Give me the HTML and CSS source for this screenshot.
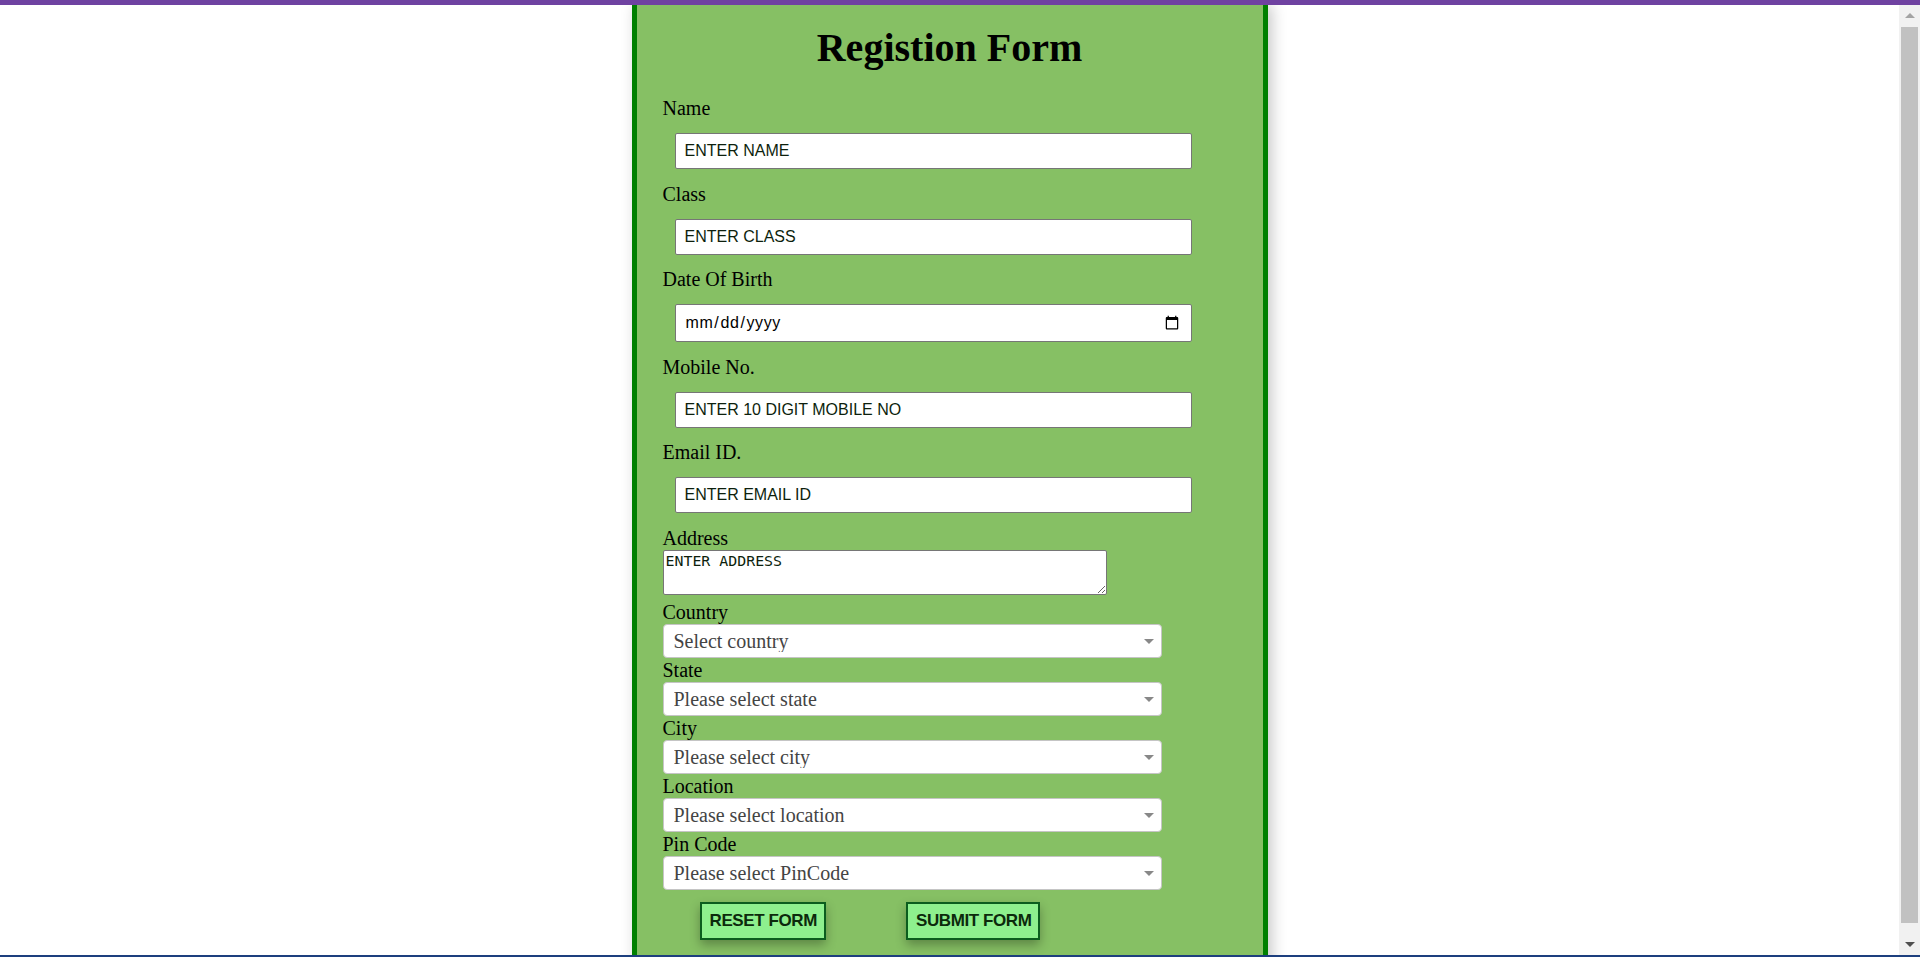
FILE: index.html
```html
<!DOCTYPE html>
<html lang="en">
<head>
<meta charset="utf-8">
<title>Registion Form</title>
<link rel="stylesheet" href="styles.css">
</head>
<body>
<div class="topbar"></div>
<div class="window">
  <div class="page">
    <div class="card">
      <h1 class="title">Registion Form</h1>
      <form class="form">
        <div class="field">
          <label class="label" for="name">Name</label>
          <input class="text-input" id="name" type="text" placeholder="ENTER NAME">
        </div>
        <div class="field">
          <label class="label" for="cls">Class</label>
          <input class="text-input" id="cls" type="text" placeholder="ENTER CLASS">
        </div>
        <div class="field">
          <label class="label" for="dob">Date Of Birth</label>
          <input class="text-input date-input" id="dob" type="date">
        </div>
        <div class="field">
          <label class="label" for="mob">Mobile No.</label>
          <input class="text-input" id="mob" type="text" placeholder="ENTER 10 DIGIT MOBILE NO">
        </div>
        <div class="field">
          <label class="label" for="mail">Email ID.</label>
          <input class="text-input" id="mail" type="text" placeholder="ENTER EMAIL ID">
        </div>
        <div class="field-plain">
          <label class="label" for="addr">Address</label>
          <textarea class="textarea" id="addr" placeholder="ENTER ADDRESS"></textarea>
        </div>
        <div class="field-plain">
          <label class="label" for="country">Country</label>
          <div class="select-wrap"><select class="select" id="country"><option>Select country</option></select></div>
        </div>
        <div class="field-plain">
          <label class="label" for="state">State</label>
          <div class="select-wrap"><select class="select" id="state"><option>Please select state</option></select></div>
        </div>
        <div class="field-plain">
          <label class="label" for="city">City</label>
          <div class="select-wrap"><select class="select" id="city"><option>Please select city</option></select></div>
        </div>
        <div class="field-plain">
          <label class="label" for="loc">Location</label>
          <div class="select-wrap"><select class="select" id="loc"><option>Please select location</option></select></div>
        </div>
        <div class="field-plain">
          <label class="label" for="pin">Pin Code</label>
          <div class="select-wrap"><select class="select" id="pin"><option>Please select PinCode</option></select></div>
        </div>
        <div class="actions">
          <button type="reset" class="btn">RESET FORM</button>
          <button type="submit" class="btn">SUBMIT FORM</button>
        </div>
      </form>
    </div>
  </div>
  <div class="scrollbar" aria-hidden="true">
    <div class="sb-button sb-up"><span class="sb-arrow-up"></span></div>
    <div class="sb-track"><div class="sb-thumb"></div></div>
    <div class="sb-button sb-down"><span class="sb-arrow-down"></span></div>
  </div>
</div>
<div class="bottombar"></div>
</body>
</html>
```

FILE: styles.css
```css
html, body {
  margin: 0;
  padding: 0;
  height: 100%;
  overflow: hidden;
  background: #ffffff;
}

body {
  display: flex;
  flex-direction: column;
  font-family: "Liberation Serif", "Times New Roman", serif;
  color: #000;
}

.topbar {
  flex: none;
  height: 5px;
  background: #6f42a1;
}

.bottombar {
  flex: none;
  height: 2px;
  background: #1d3f7e;
}

.window {
  flex: 1;
  min-height: 0;
  display: flex;
}

.page {
  flex: 1;
  min-width: 0;
  overflow: hidden;
}

/* drawn scrollbar */
.scrollbar {
  flex: none;
  width: 21px;
  display: flex;
  flex-direction: column;
  background: #f1f1f1;
}

.sb-button {
  flex: none;
  height: 21px;
  display: flex;
  align-items: center;
  justify-content: center;
}

.sb-arrow-up {
  width: 0;
  height: 0;
  border-style: solid;
  border-width: 0 5px 5px 5px;
  border-color: transparent transparent #a3a3a3 transparent;
}

.sb-arrow-down {
  width: 0;
  height: 0;
  border-style: solid;
  border-width: 5px 5px 0 5px;
  border-color: #505050 transparent transparent transparent;
}

.sb-track {
  flex: 1;
  padding: 1px 2px 11px;
  display: flex;
}

.sb-thumb {
  flex: 1;
  background: #c1c1c1;
}

.card {
  box-sizing: border-box;
  width: 636px;
  margin: 0 auto;
  padding: 20px 26px 32px;
  background: #86c064;
  border-left: 5px solid #008000;
  border-right: 5px solid #008000;
  box-shadow: 4px 0 14px rgba(0, 0, 0, 0.22);
}

.title {
  margin: 0 0 26px;
  font-size: 40px;
  line-height: 46px;
  font-weight: bold;
  text-align: center;
}

.form {
  display: flex;
  flex-direction: column;
}

.label {
  display: block;
  font-size: 20px;
  line-height: 23px;
}

.text-input {
  display: block;
  box-sizing: border-box;
  width: 517px;
  height: 36px;
  margin: 13px 0 13.7px 12px;
  padding: 0 9px;
  border: 1px solid #767676;
  border-radius: 2px;
  background: #fff;
  font-family: "Liberation Sans", Arial, sans-serif;
  font-size: 16px;
  color: #000;
}

.text-input::placeholder {
  color: #0d1f0d;
  opacity: 1;
}

.date-input {
  height: 37.5px;
  letter-spacing: 0.6px;
}

.textarea {
  display: block;
  box-sizing: border-box;
  width: 444px;
  height: 45px;
  margin: 0 0 6px;
  padding: 2px 2px;
  border: 1px solid #767676;
  border-radius: 2px;
  background: #fff;
  font-family: "DejaVu Sans Mono", "Liberation Mono", monospace;
  font-size: 14.9px;
  line-height: 17px;
  color: #000;
}

.textarea::placeholder {
  color: #0d1f0d;
  opacity: 1;
}

.select-wrap {
  position: relative;
  width: 499px;
  margin-bottom: 1px;
}

.select-wrap::after {
  content: "";
  position: absolute;
  right: 8px;
  top: 15px;
  border-style: solid;
  border-width: 5px 5px 0 5px;
  border-color: #888 transparent transparent transparent;
  pointer-events: none;
}

.select {
  display: block;
  box-sizing: border-box;
  width: 100%;
  height: 34px;
  margin: 0;
  padding: 0 24px 0 10px;
  border: 1px solid #c5c5c5;
  border-radius: 4px;
  background: #fff;
  font-family: "Liberation Serif", "Times New Roman", serif;
  font-size: 20px;
  color: #444;
  -webkit-appearance: none;
  appearance: none;
}

.actions {
  display: flex;
  gap: 80px;
  margin-top: 11px;
  padding-left: 37px;
}

.btn {
  box-sizing: border-box;
  height: 38px;
  padding: 0 7px 0 8px;
  border: 2px solid #0b5d1e;
  background: #8ef08e;
  font-family: "Liberation Sans", Arial, sans-serif;
  font-weight: bold;
  font-size: 17px;
  letter-spacing: -0.4px;
  color: #0c2a0c;
  box-shadow: 0 5px 10px rgba(0, 0, 0, 0.3);
  cursor: pointer;
}
```
